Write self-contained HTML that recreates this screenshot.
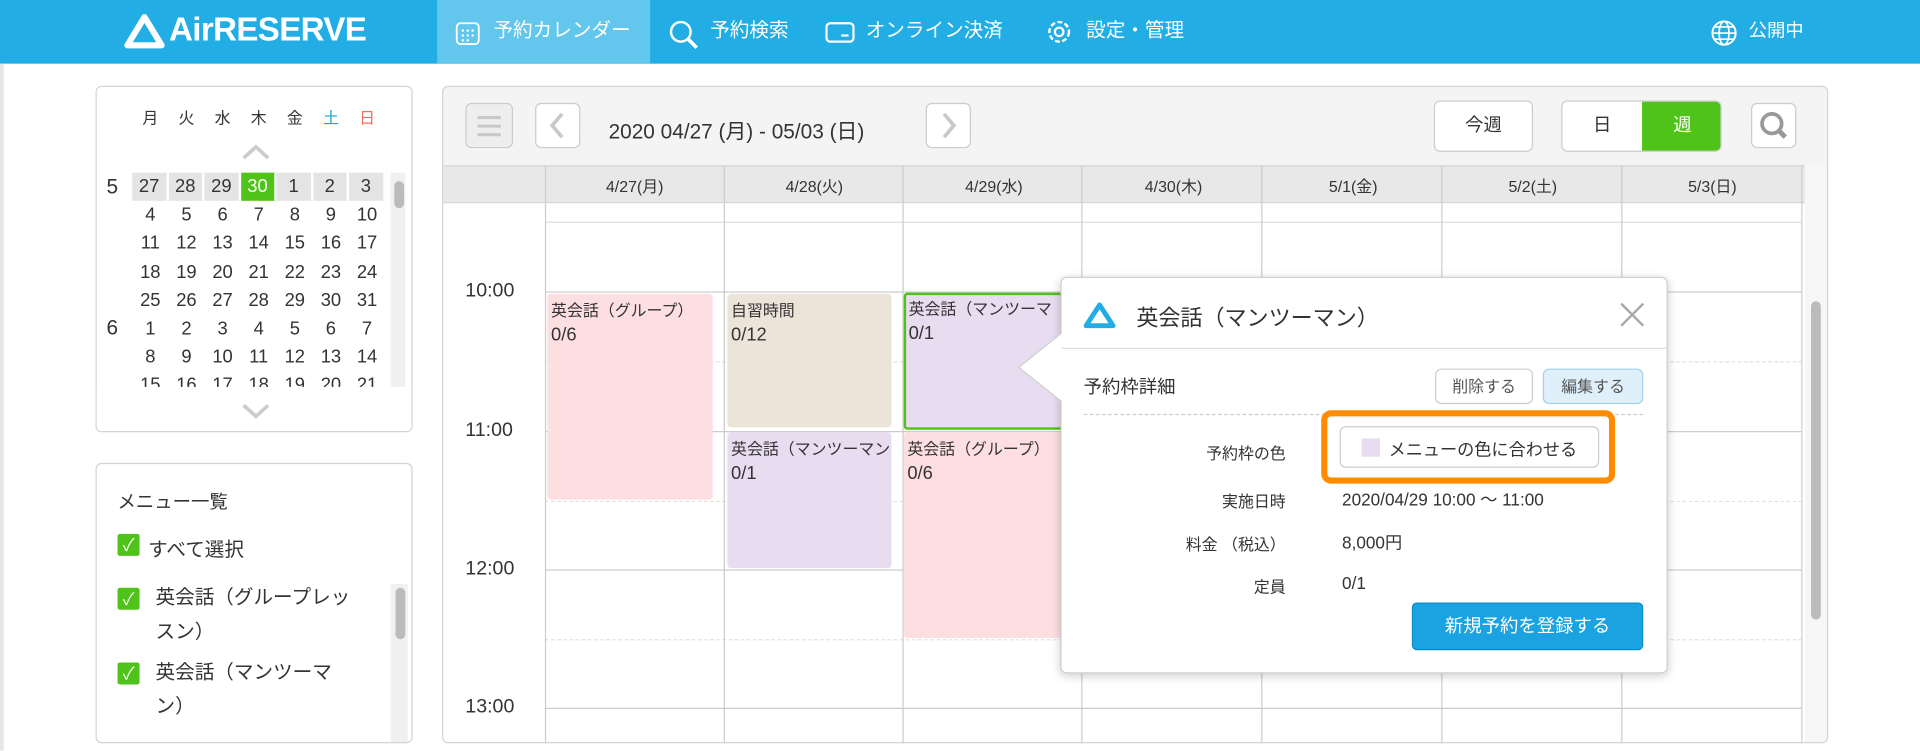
<!DOCTYPE html>
<html><head><meta charset="utf-8"><style>
*{box-sizing:border-box;margin:0;padding:0}
html,body{width:1920px;height:750px;overflow:hidden;background:#fff}
#s{position:absolute;left:0;top:0;width:1568px;height:613px;transform:scale(1.22449);transform-origin:0 0;font-family:"Liberation Sans","Noto Sans CJK JP",sans-serif;color:#333}
.a{position:absolute}
.hd{left:0;top:0;width:1568px;height:52px;background:#22ade4;color:#fff}
.tab{top:0;height:52px;line-height:52px;font-size:16px;color:#fff}
.box{border:1px solid #d4d4d4;border-radius:5px;background:#fff}
.row{display:flex;height:23.2px;line-height:23.2px}
.mc{font-size:15px;color:#333;text-align:center;width:29.5px;flex:none}
.r1 .mc{background:#e4e4e4;border-right:2px solid #fff}
.cb{width:18px;height:18px;background:#4fc31a;border-radius:2px;color:#fff;font-size:14px;line-height:18px;text-align:center}
.btn{background:#fff;border:1px solid #ccc;border-radius:5px;text-align:center}
.ev{font-size:13px;padding:4px 3px;line-height:20px;border-radius:3px;overflow:hidden;white-space:nowrap}
.ev b{font-weight:normal;font-size:15px}
.tm{font-size:16px;color:#333;left:380px}
.lbl{font-size:13px;color:#333;text-align:right;width:170px;left:880px}
.val{font-size:14px;left:1096px}
</style></head><body><div id="s">
<div class="a hd"></div>
<svg class="a" style="left:101px;top:11px" width="34" height="30" viewBox="0 0 34 30"><path d="M17 3 L31 26 L3 26 Z" fill="none" stroke="#fff" stroke-width="5" stroke-linejoin="round"/></svg>
<div class="a" style="left:138px;top:9px;font-size:27px;font-weight:bold;color:#fff;letter-spacing:-0.5px">AirRESERVE</div>
<div class="a" style="left:357px;top:0;width:174px;height:52px;background:#63c6ed"></div>
<svg class="a" style="left:371px;top:16px" width="22" height="22"><rect x="2" y="3" width="18" height="17" rx="3" fill="none" stroke="#fff" stroke-width="1.5"/><g fill="#fff"><circle cx="7" cy="9" r="1"/><circle cx="11" cy="9" r="1"/><circle cx="15" cy="9" r="1"/><circle cx="7" cy="13" r="1"/><circle cx="11" cy="13" r="1"/><circle cx="15" cy="13" r="1"/><circle cx="7" cy="17" r="1"/><circle cx="11" cy="17" r="1"/></g></svg>
<div class="a tab" style="left:403px">予約カレンダー</div>
<svg class="a" style="left:545px;top:15px" width="28" height="26"><circle cx="11" cy="11" r="8" fill="none" stroke="#fff" stroke-width="2"/><path d="M17 17 L24 24" stroke="#fff" stroke-width="3"/></svg>
<div class="a tab" style="left:580px">予約検索</div>
<svg class="a" style="left:673px;top:16px" width="26" height="20"><rect x="2" y="3" width="22" height="15" rx="3" fill="none" stroke="#fff" stroke-width="1.8"/><path d="M14 13 H20" stroke="#fff" stroke-width="1.8"/></svg>
<div class="a tab" style="left:707px">オンライン決済</div>
<svg class="a" style="left:853px;top:14px" width="24" height="24"><circle cx="12" cy="12" r="8" fill="none" stroke="#fff" stroke-width="2" stroke-dasharray="4 2"/><circle cx="12" cy="12" r="3.5" fill="none" stroke="#fff" stroke-width="1.8"/></svg>
<div class="a tab" style="left:887px">設定・管理</div>
<svg class="a" style="left:1397px;top:16px" width="22" height="22"><circle cx="11" cy="11" r="9.5" fill="none" stroke="#fff" stroke-width="1.6"/><ellipse cx="11" cy="11" rx="4" ry="9.5" fill="none" stroke="#fff" stroke-width="1.4"/><path d="M1.5 11H20.5M3 6H19M3 16H19" stroke="#fff" stroke-width="1.4"/></svg>
<div class="a tab" style="left:1428px;font-size:15px">公開中</div>
<div class="a" style="left:0;top:52px;width:3px;height:561px;background:#e6e6e6"></div>

<div class="a box" style="left:78px;top:70px;width:259px;height:283px;overflow:hidden">
<div class="a row" style="left:29px;top:14px;font-size:13px"><span class="mc" style="font-size:13px">月</span><span class="mc" style="font-size:13px">火</span><span class="mc" style="font-size:13px">水</span><span class="mc" style="font-size:13px">木</span><span class="mc" style="font-size:13px">金</span><span class="mc" style="font-size:13px;color:#1aa3e0">土</span><span class="mc" style="font-size:13px;color:#f07060">日</span></div>
<svg class="a" style="left:118px;top:46px" width="24" height="14"><path d="M2 12 L12 3 L22 12" fill="none" stroke="#ccc" stroke-width="3"/></svg>
<div class="a" style="left:8px;top:72px;font-size:17px">5</div>
<div class="a" style="left:8px;top:187px;font-size:17px">6</div>
<div class="a" style="left:29px;top:70px;width:215px">
<div class="row r1"><span class="mc">27</span><span class="mc">28</span><span class="mc">29</span><span class="mc" style="color:#fff;background:#4fc31a">30</span><span class="mc">1</span><span class="mc">2</span><span class="mc">3</span></div>
<div class="row"><span class="mc">4</span><span class="mc">5</span><span class="mc">6</span><span class="mc">7</span><span class="mc">8</span><span class="mc">9</span><span class="mc">10</span></div>
<div class="row"><span class="mc">11</span><span class="mc">12</span><span class="mc">13</span><span class="mc">14</span><span class="mc">15</span><span class="mc">16</span><span class="mc">17</span></div>
<div class="row"><span class="mc">18</span><span class="mc">19</span><span class="mc">20</span><span class="mc">21</span><span class="mc">22</span><span class="mc">23</span><span class="mc">24</span></div>
<div class="row"><span class="mc">25</span><span class="mc">26</span><span class="mc">27</span><span class="mc">28</span><span class="mc">29</span><span class="mc">30</span><span class="mc">31</span></div>
<div class="row"><span class="mc">1</span><span class="mc">2</span><span class="mc">3</span><span class="mc">4</span><span class="mc">5</span><span class="mc">6</span><span class="mc">7</span></div>
<div class="row"><span class="mc">8</span><span class="mc">9</span><span class="mc">10</span><span class="mc">11</span><span class="mc">12</span><span class="mc">13</span><span class="mc">14</span></div>
<div class="row"><span class="mc">15</span><span class="mc">16</span><span class="mc">17</span><span class="mc">18</span><span class="mc">19</span><span class="mc">20</span><span class="mc">21</span></div>
</div>
<div class="a" style="left:0;top:245px;width:259px;height:45px;background:#fff"></div>
<svg class="a" style="left:118px;top:258px" width="24" height="14"><path d="M2 2 L12 11 L22 2" fill="none" stroke="#ccc" stroke-width="3"/></svg>
<div class="a" style="left:240px;top:70px;width:12px;height:175px;background:#f0f0f0"></div>
<div class="a" style="left:243px;top:77px;width:8px;height:22px;background:#bbb;border-radius:4px"></div>
</div>

<div class="a box" style="left:78px;top:378px;width:259px;height:229px;overflow:hidden">
<div class="a" style="left:17px;top:20px;font-size:15px">メニュー一覧</div>
<div class="a cb" style="left:17px;top:57px">✓</div><div class="a" style="left:42px;top:56px;font-size:16px">すべて選択</div>
<div class="a cb" style="left:17px;top:101px">✓</div><div class="a" style="left:48px;top:96px;font-size:16px;line-height:28px;width:163px">英会話（グループレッスン）</div>
<div class="a cb" style="left:17px;top:162px">✓</div><div class="a" style="left:48px;top:157px;font-size:16px;line-height:28px;width:150px">英会話（マンツーマン）</div>
<div class="a" style="left:240px;top:98px;width:14px;height:131px;background:#f0f0f0"></div>
<div class="a" style="left:244px;top:101px;width:8px;height:42px;background:#bbb;border-radius:4px"></div>
</div>

<div class="a box" style="left:361px;top:70px;width:1132px;height:537px;background:#f4f4f4;overflow:hidden">
<div class="a btn" style="left:18px;top:13px;width:39px;height:37px;background:#eee"><svg width="37" height="35"><path d="M9 11H28M9 18H28M9 25H28" stroke="#c8c8c8" stroke-width="2.5"/></svg></div>
<div class="a btn" style="left:75px;top:13px;width:37px;height:37px"><svg width="35" height="35"><path d="M21 8 L13 17.5 L21 27" fill="none" stroke="#c8c8c8" stroke-width="3"/></svg></div>
<div class="a" style="left:135px;top:22px;font-size:17px">2020 04/27 (月) - 05/03 (日)</div>
<div class="a btn" style="left:394px;top:13px;width:37px;height:37px"><svg width="35" height="35"><path d="M14 8 L22 17.5 L14 27" fill="none" stroke="#c8c8c8" stroke-width="3"/></svg></div>
<div class="a btn" style="left:809px;top:11px;width:81px;height:42px;line-height:40px;font-size:15px">今週</div>
<div class="a btn" style="left:913px;top:11px;width:131px;height:42px;overflow:hidden"><div style="position:absolute;left:0;width:65px;line-height:40px;font-size:15px">日</div><div style="position:absolute;left:65px;width:66px;height:42px;background:#4fc31a;color:#fff;line-height:40px;font-size:15px">週</div></div>
<div class="a btn" style="left:1068px;top:13px;width:37px;height:37px"><svg width="35" height="35"><circle cx="16" cy="16" r="8" fill="none" stroke="#999" stroke-width="3"/><path d="M22 22 L27 27" stroke="#999" stroke-width="4"/></svg></div>
<div class="a" style="left:0;top:64px;width:1112px;height:31px;background:#e8e8e8;border-top:1px solid #d4d4d4;border-bottom:1px solid #d4d4d4"></div>
<div class="a" style="left:0;top:95px;width:1112px;height:442px;background:#fff"></div>
<div class="a" style="left:1112px;top:64px;width:20px;height:473px;background:#f6f6f6"></div>
<div class="a" style="left:1117px;top:175px;width:8px;height:260px;background:#bbb;border-radius:4px"></div>
</div>
<div class="a" style="left:445px;top:135px;width:1027px;height:472px;">
<div class="a" style="left:0;top:46px;width:1027px;border-top:1px solid #ddd"></div>
<div class="a" style="left:0;top:103px;width:1027px;border-top:1px solid #ccc"></div>
<div class="a" style="left:0;top:160px;width:1027px;border-top:1px dashed #e2e2e2"></div>
<div class="a" style="left:0;top:217px;width:1027px;border-top:1px solid #ccc"></div>
<div class="a" style="left:0;top:274px;width:1027px;border-top:1px dashed #e2e2e2"></div>
<div class="a" style="left:0;top:330px;width:1027px;border-top:1px solid #ccc"></div>
<div class="a" style="left:0;top:387px;width:1027px;border-top:1px dashed #e2e2e2"></div>
<div class="a" style="left:0;top:443px;width:1027px;border-top:1px solid #ccc"></div>
</div>
<div class="a" style="left:445px;top:135px;width:1px;height:472px;background:#ccc"></div>
<div class="a" style="left:591px;top:135px;width:1px;height:472px;background:#ccc"></div>
<div class="a" style="left:737px;top:135px;width:1px;height:472px;background:#ccc"></div>
<div class="a" style="left:883px;top:135px;width:1px;height:472px;background:#ccc"></div>
<div class="a" style="left:1030px;top:135px;width:1px;height:472px;background:#ccc"></div>
<div class="a" style="left:1177px;top:135px;width:1px;height:472px;background:#ccc"></div>
<div class="a" style="left:1324px;top:135px;width:1px;height:472px;background:#ccc"></div>
<div class="a" style="left:1471px;top:135px;width:1px;height:472px;background:#ccc"></div>
<div class="a" style="top:142px;left:445px;width:1027px;display:flex;font-size:13px;text-align:center">
<div style="width:146.7px">4/27(月)</div><div style="width:146.7px">4/28(火)</div><div style="width:146.7px">4/29(水)</div><div style="width:146.7px">4/30(木)</div><div style="width:146.7px">5/1(金)</div><div style="width:146.7px">5/2(土)</div><div style="width:146.7px">5/3(日)</div></div>
<div class="a tm" style="top:229px">10:00</div>
<div class="a tm" style="top:343px">11:00</div>
<div class="a tm" style="top:456px">12:00</div>
<div class="a tm" style="top:569px">13:00</div>
<div class="a ev" style="left:447px;top:240px;width:135px;height:168px;background:#fddfe2">英会話（グループ）<br><b>0/6</b></div>
<div class="a ev" style="left:594px;top:240px;width:134px;height:109px;background:#ece4d8">自習時間<br><b>0/12</b></div>
<div class="a ev" style="left:594px;top:353px;width:134px;height:111px;background:#e8dcf0">英会話（マンツーマン<br><b>0/1</b></div>
<div class="a ev" style="left:738px;top:239px;width:130px;height:112px;background:#e8dcf0;border:2px solid #4fc31a;padding:2px 2px">英会話（マンツーマ<br><b>0/1</b></div>
<div class="a ev" style="left:738px;top:353px;width:130px;height:168px;background:#fddfe2">英会話（グループ）<br><b>0/6</b></div>
<div class="a" style="left:866px;top:226px;width:496px;height:324px;background:#fff;border:1px solid #d0d0d0;border-radius:5px;box-shadow:0 2px 8px rgba(0,0,0,.2)"></div>
<svg class="a" style="left:829px;top:270px" width="40" height="60"><path d="M38 2 L3 30 L38 58" fill="#fff" stroke="#d0d0d0" stroke-width="1"/><rect x="38" y="0" width="3" height="60" fill="#fff"/></svg>
<svg class="a" style="left:884px;top:246px" width="28" height="24"><path d="M14 3 L25 20 L3 20 Z" fill="none" stroke="#22ade4" stroke-width="4" stroke-linejoin="round"/></svg>
<div class="a" style="left:928px;top:246px;font-size:18px">英会話（マンツーマン）</div>
<svg class="a" style="left:1322px;top:246px" width="22" height="22"><path d="M2 2L20 20M20 2L2 20" stroke="#aaa" stroke-width="2"/></svg>
<div class="a" style="left:867px;top:284px;width:494px;border-top:1px solid #e0e0e0"></div>
<div class="a" style="left:885px;top:305px;font-size:15px">予約枠詳細</div>
<div class="a btn" style="left:1172px;top:301px;width:80px;height:29px;line-height:27px;font-size:13px;color:#555">削除する</div>
<div class="a btn" style="left:1260px;top:301px;width:82px;height:29px;line-height:27px;font-size:13px;color:#555;background:#dff0fa;border-color:#9fd3ef">編集する</div>
<div class="a" style="left:885px;top:338px;width:457px;border-top:1px dashed #ccc"></div>
<div class="a lbl" style="top:360px">予約枠の色</div>
<div class="a" style="left:1079px;top:335px;width:240px;height:60px;border:5px solid #ff8c00;border-radius:8px"></div>
<div class="a btn" style="left:1094px;top:348px;width:212px;height:34px"></div>
<div class="a" style="left:1112px;top:358px;width:15px;height:15px;background:#e8dcf0"></div>
<div class="a" style="left:1134px;top:357px;font-size:14px">メニューの色に合わせる</div>
<div class="a lbl" style="top:399px">実施日時</div><div class="a val" style="top:398px">2020/04/29 10:00 ～ 11:00</div>
<div class="a lbl" style="top:434px">料金 （税込）</div><div class="a val" style="top:433px">8,000円</div>
<div class="a lbl" style="top:469px">定員</div><div class="a val" style="top:468px">0/1</div>
<div class="a" style="left:1153px;top:492px;width:189px;height:39px;background:#1aa3e0;border:1px solid #0c8cc4;border-radius:4px;color:#fff;font-size:15px;text-align:center;line-height:37px">新規予約を登録する</div>
</div></body></html>
